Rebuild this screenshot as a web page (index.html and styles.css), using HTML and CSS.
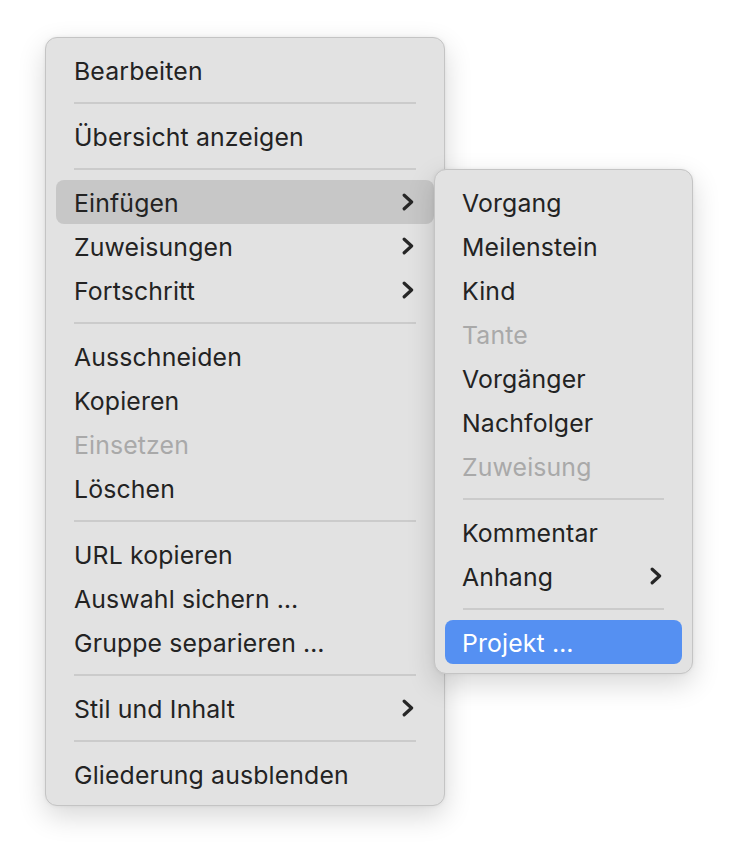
FILE: index.html
```html
<!DOCTYPE html>
<html lang="de">
<head>
<meta charset="utf-8">
<link rel="stylesheet" href="styles.css">
</head>
<body>
<div class="stage">
  <div class="menu main">
    <div class="item">Bearbeiten</div>
    <div class="sep"></div>
    <div class="item">Übersicht anzeigen</div>
    <div class="sep"></div>
    <div class="item hover">Einfügen<svg class="chev" viewBox="0 0 12 18"><path d="M2.2 2.2 L9.6 9 L2.2 15.8"/></svg></div>
    <div class="item">Zuweisungen<svg class="chev" viewBox="0 0 12 18"><path d="M2.2 2.2 L9.6 9 L2.2 15.8"/></svg></div>
    <div class="item">Fortschritt<svg class="chev" viewBox="0 0 12 18"><path d="M2.2 2.2 L9.6 9 L2.2 15.8"/></svg></div>
    <div class="sep"></div>
    <div class="item">Ausschneiden</div>
    <div class="item">Kopieren</div>
    <div class="item disabled">Einsetzen</div>
    <div class="item">Löschen</div>
    <div class="sep"></div>
    <div class="item">URL kopieren</div>
    <div class="item">Auswahl sichern …</div>
    <div class="item">Gruppe separieren …</div>
    <div class="sep"></div>
    <div class="item">Stil und Inhalt<svg class="chev" viewBox="0 0 12 18"><path d="M2.2 2.2 L9.6 9 L2.2 15.8"/></svg></div>
    <div class="sep"></div>
    <div class="item">Gliederung ausblenden</div>
  </div>
  <div class="menu sub">
    <div class="item">Vorgang</div>
    <div class="item">Meilenstein</div>
    <div class="item">Kind</div>
    <div class="item disabled">Tante</div>
    <div class="item">Vorgänger</div>
    <div class="item">Nachfolger</div>
    <div class="item disabled">Zuweisung</div>
    <div class="sep"></div>
    <div class="item">Kommentar</div>
    <div class="item">Anhang<svg class="chev" viewBox="0 0 12 18"><path d="M2.2 2.2 L9.6 9 L2.2 15.8"/></svg></div>
    <div class="sep"></div>
    <div class="item selected">Projekt …</div>
  </div>
</div>
</body>
</html>
```

FILE: styles.css
```css
html, body {
  margin: 0;
  padding: 0;
  background: #ffffff;
}
body {
  font-family: Inter, "Noto Sans", "Liberation Sans", sans-serif;
  color: #232323;
  -webkit-font-smoothing: antialiased;
}
.stage {
  position: relative;
  width: 738px;
  height: 860px;
}
.menu {
  position: absolute;
  box-sizing: border-box;
  background: #e2e2e2;
  border: 1px solid #c4c4c4;
  border-radius: 12px;
  padding: 10px 10px 9px;
  box-shadow: 0 10px 28px rgba(0, 0, 0, 0.16), 0 0 4px rgba(0, 0, 0, 0.06);
}
.main {
  left: 45px;
  top: 37px;
  width: 400px;
}
.sub {
  left: 434px;
  top: 169px;
  width: 259px;
  z-index: 2;
}
.item {
  box-sizing: border-box;
  height: 44px;
  display: flex;
  align-items: center;
  justify-content: space-between;
  padding: 2px 20px 0 18px;
  border-radius: 8px;
  font-size: 24.8px;
  letter-spacing: 0.15px;
  line-height: 1;
  white-space: nowrap;
}
.sub .item {
  padding-left: 17px;
}
.item.hover {
  background: #c7c7c7;
}
.item.selected {
  background: #5590f2;
  color: #ffffff;
}
.item.disabled {
  color: #a9a9a9;
}
.sep {
  height: 22px;
  display: flex;
  align-items: center;
  padding: 0 18px;
}
.sep::before {
  content: "";
  flex: 1;
  height: 2px;
  background: #cbcbcb;
}
.chev {
  width: 12px;
  height: 18px;
  flex: none;
  margin-top: -2px;
}
.chev path {
  fill: none;
  stroke: #262626;
  stroke-width: 3.2;
  stroke-linecap: round;
  stroke-linejoin: round;
}
```
